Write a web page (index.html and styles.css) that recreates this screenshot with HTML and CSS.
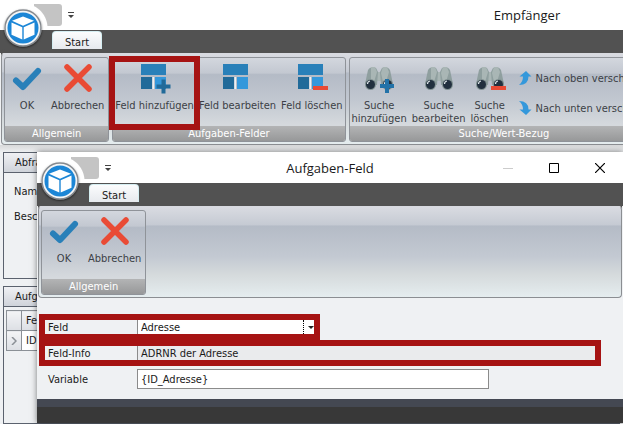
FILE: index.html
```html
<!DOCTYPE html>
<html lang="de">
<head>
  <meta charset="UTF-8">
  <meta name="viewport" content="width=device-width, initial-scale=1.0">
  <title>Empfänger</title>
  <link rel="stylesheet" href="styles.css">
</head>
<body>
  <!-- shared icon shapes -->
  <svg class="sprite" aria-hidden="true">
    <symbol id="cube" viewBox="0 0 38 38">
      <circle cx="19" cy="19" r="18" fill="#f4f5f6" stroke="#85898e" stroke-width="1.5"/>
      <circle cx="19" cy="19" r="15.5" fill="#1c86d6"/>
      <path d="M19 7.500l11 4.300L19 16.700 8 11.800z" fill="#fff"/>
      <path d="M7.500 13.400l10.800 4.900v12.200L7.500 25.800zM30.500 13.400l-10.800 4.900v12.200l10.800-4.700z" fill="#fff"/>
    </symbol>
    <symbol id="check" viewBox="0 0 32 32">
      <path d="M5 18.500l7 6.500L27 9" fill="none" stroke="#2980b9" stroke-width="6" stroke-linecap="round" stroke-linejoin="round"/>
    </symbol>
    <symbol id="cross" viewBox="0 0 32 32">
      <path d="M5 5l22 22M27 5L5 27" fill="none" stroke="#e94b35" stroke-width="5.500" stroke-linecap="round"/>
    </symbol>
    <symbol id="tiles" viewBox="0 0 32 32">
      <path d="M2 2h25v11H2z" fill="#2980b9"/>
      <path d="M2 15h11v12H2z" fill="#216a99"/>
      <path d="M16 15h11v12H16z" fill="#3498db"/>
      <path d="M13.500 15h1.500v12h-1.500z" fill="#edf1f4"/>
    </symbol>
    <symbol id="binoculars" viewBox="0 0 32 32">
      <path d="M12 10h8v9h-8z" fill="#a9b6b5"/>
      <path d="M2 22L5 8q1-2 4-3l4 1 2 4-1 13zM30 22L27 8q-1-2-4-3l-4 1-2 4 1 13z" fill="#8f9f9f"/>
      <path d="M8 5h4l2 5-3 10H8zM20 5h4l2 5-3 10h-3l-2-9z" fill="#a9b6b5"/>
      <circle cx="7.500" cy="22.500" r="5.500" fill="#809091"/>
      <circle cx="24.500" cy="22.500" r="5.500" fill="#809091"/>
      <circle cx="7.500" cy="22.500" r="4.500" fill="#22303f"/>
      <circle cx="24.500" cy="22.500" r="4.500" fill="#22303f"/>
      <path d="M4.500 22q0-2.500 2.500-3M21.500 22q0-2.500 2.500-3" fill="none" stroke="#dfe7e9" stroke-width="1.200"/>
    </symbol>
    <symbol id="arrow" viewBox="0 0 14 16">
      <path d="M1 15Q5 12 5 6.500H1.500L8 1l5.500 5.500h-3Q10.500 15 1 15z" fill="#3498db"/>
    </symbol>
  </svg>

  <div class="window">
    <header class="titlebar titlebar-main">
      <div class="quick-access">
        <span class="quick-box"></span>
        <svg class="quick-arrow" viewBox="0 0 6 7"><path d="M0 0h6v1H0zM0 3h6L3 6z" fill="#444"/></svg>
      </div>
      <h1>Empfänger</h1>
    </header>
    <nav class="tabs"><a class="tab" href="#start">Start</a></nav>
    <button class="orb" aria-label="Menü"><svg><use href="#cube"/></svg></button>

    <div class="ribbon ribbon-wide">
      <section class="group">
        <div class="tools">
          <button class="tool"><svg><use href="#check"/></svg>OK</button>
          <button class="tool"><svg><use href="#cross"/></svg>Abbrechen</button>
        </div>
        <h2>Allgemein</h2>
      </section>
      <section class="group">
        <div class="tools tools-dense">
          <button class="tool marked">
            <svg viewBox="0 0 32 32"><use href="#tiles"/><path d="M22.500 17.500h4v5h5v4h-5v5h-4v-5h-5v-4h5z" fill="#216a99"/></svg>Feld hinzufügen
          </button>
          <button class="tool"><svg><use href="#tiles"/></svg>Feld bearbeiten</button>
          <button class="tool">
            <svg viewBox="0 0 32 32"><use href="#tiles"/><path d="M17 24h15v4H17z" fill="#e94b35"/></svg>Feld löschen
          </button>
        </div>
        <h2>Aufgaben-Felder</h2>
      </section>
      <section class="group">
        <div class="tools tools-dense">
          <button class="tool">
            <svg viewBox="0 0 32 32"><use href="#binoculars"/><path d="M22 17h4v5h5v4h-5v5h-4v-5h-5v-4h5z" fill="#2272a8"/></svg>Suche<br>hinzufügen
          </button>
          <button class="tool"><svg><use href="#binoculars"/></svg>Suche<br>bearbeiten</button>
          <button class="tool">
            <svg viewBox="0 0 32 32"><use href="#binoculars"/><path d="M17 24h15v4H17z" fill="#e94b35"/></svg>Suche<br>löschen
          </button>
          <div class="moves">
            <button class="move"><svg><use href="#arrow"/></svg>Nach oben verschieben</button>
            <button class="move"><svg class="flip"><use href="#arrow"/></svg>Nach unten verschieben</button>
          </div>
        </div>
        <h2>Suche/Wert-Bezug</h2>
      </section>
    </div>

    <main class="content">
      <section class="panel panel-query">
        <h3>Abfrage</h3>
        <p>Name</p>
        <p>Beschreibung</p>
      </section>
      <section class="panel panel-fields">
        <h3>Aufgaben</h3>
        <table class="fields">
          <tr><th></th><th>Feld</th></tr>
          <tr><td class="marker"><svg viewBox="0 0 6 8"><path d="M1 0l4 4-4 4" fill="none" stroke="#8b9096" stroke-width="1.500"/></svg></td><td>ID</td></tr>
        </table>
      </section>
    </main>
  </div>

  <div class="window dialog" role="dialog" aria-labelledby="dialogTitle">
    <header class="titlebar titlebar-dialog">
      <div class="quick-access">
        <span class="quick-box"></span>
        <svg class="quick-arrow" viewBox="0 0 6 7"><path d="M0 0h6v1H0zM0 3h6L3 6z" fill="#444"/></svg>
      </div>
      <h1 id="dialogTitle">Aufgaben-Feld</h1>
      <div class="controls">
        <button aria-label="Minimieren" disabled><svg viewBox="0 0 10 10"><path d="M0 5.500h10" stroke="#ccc"/></svg></button>
        <button aria-label="Maximieren"><svg viewBox="0 0 10 10"><path d="M.5.5h9v9h-9z" fill="none" stroke="#000"/></svg></button>
        <button aria-label="Schließen"><svg viewBox="0 0 10 10"><path d="M0 0l10 10M10 0L0 10" stroke="#000" stroke-width="1.200"/></svg></button>
      </div>
    </header>
    <nav class="tabs"><a class="tab" href="#start">Start</a></nav>
    <button class="orb" aria-label="Menü"><svg><use href="#cube"/></svg></button>

    <div class="ribbon">
      <section class="group">
        <div class="tools">
          <button class="tool"><svg><use href="#check"/></svg>OK</button>
          <button class="tool"><svg><use href="#cross"/></svg>Abbrechen</button>
        </div>
        <h2>Allgemein</h2>
      </section>
    </div>

    <form class="form">
      <div class="row outlined row-field">
        <label for="field">Feld</label>
        <div class="select">
          <select id="field"><option>Adresse</option></select>
          <span class="select-arrow"></span>
        </div>
      </div>
      <div class="row outlined row-info">
        <label for="info">Feld-Info</label>
        <input id="info" type="text" value="ADRNR der Adresse" readonly>
      </div>
      <div class="row row-variable">
        <label for="variable">Variable</label>
        <input id="variable" type="text" value="{ID_Adresse}">
      </div>
    </form>
    <footer class="statusbar"></footer>
  </div>
</body>
</html>
```

FILE: styles.css
```css
* {
  box-sizing: border-box;
}
body {
  margin: 0;
  height: 100vh;
  overflow: hidden;
  position: relative;
  font-family: Tahoma, "DejaVu Sans Condensed", "DejaVu Sans", sans-serif;
  font-size: 11px;
  line-height: 13px;
  color: #1a1a1a;
}
h1, h2, h3, p {
  margin: 0;
  font-size: 11px;
  font-weight: normal;
}
button, input, select {
  font: inherit;
  color: inherit;
  border: 0;
  padding: 0;
  margin: 0;
  background: none;
}
svg {
  display: block;
}
.sprite {
  position: absolute;
  width: 0;
  height: 0;
}

/* windows */
.window {
  display: flex;
  flex-direction: column;
  height: 100%;
  position: relative;
  overflow: hidden;
  background: #eff1f3;
}
.dialog {
  position: absolute;
  z-index: 2;
  top: 152px;
  left: 37px;
  right: 0;
  height: auto;
  border-top: 1px solid #fff;
  overflow: visible;
  box-shadow: 0 0 6px rgba(0, 0, 0, 0.5);
}
.titlebar {
  display: grid;
  align-items: center;
  height: 30px;
  flex: none;
  background: #fff;
}
.titlebar-main {
  grid-template-columns: 431px 1fr;
}
.titlebar-dialog {
  grid-template-columns: 138px 1fr 138px;
}
.titlebar h1 {
  font-family: "Segoe UI", "Open Sans", sans-serif;
  font-size: 13px;
  line-height: 20px;
  text-align: center;
}
.quick-access {
  display: flex;
  align-items: center;
  gap: 6px;
  padding-left: 34px;
}
.quick-box {
  width: 28px;
  height: 22px;
  border-radius: 0 3px 3px 0;
  background: radial-gradient(circle at -11px 24px, #fff 24px, #c4c4c4 25px);
}
.quick-arrow {
  width: 6px;
  height: 7px;
}
.controls {
  display: flex;
}
.controls button {
  flex: 1;
  display: flex;
  justify-content: center;
}
.controls svg {
  width: 10px;
  height: 10px;
}
.tabs {
  display: flex;
  align-items: flex-end;
  flex: none;
  height: 23px;
  padding-left: 52px;
  background: #525252;
}
.tab {
  width: 50px;
  height: 22px;
  line-height: 22px;
  border: 1px solid #d5eef2;
  border-bottom: 0;
  border-radius: 4px 4px 0 0;
  background: linear-gradient(#fbfcfd, #e2e5ea);
  color: #1a1a1a;
  text-align: center;
  text-decoration: none;
}
.orb {
  position: absolute;
  top: 9px;
  left: 4px;
  border-radius: 50%;
  box-shadow: 0 1px 2px rgba(0, 0, 0, 0.5);
}
.orb svg {
  width: 38px;
  height: 38px;
}

/* ribbon */
.ribbon {
  display: flex;
  gap: 3px;
  flex: none;
  height: 92px;
  margin: 0 1px;
  padding: 3px 2px 2px;
  border: 1px solid #8b8e92;
  border-top-color: #d8dae0;
  border-radius: 4px;
  background: linear-gradient(#d9dbe1, #c5cad3 20%, #b4bbc6 21%, #c3c9d2 55%, #d5dadc 75%, #e5edef);
  box-shadow: 0 -4px 0 #525252;
}
.ribbon-wide {
  margin-right: -4px;
}
.group {
  display: flex;
  flex-direction: column;
  flex: none;
  border: 1px solid #8f9399;
  border-radius: 3px;
  background: linear-gradient(#d3d7de, #c3c8d1 18%, #b4bbc6 20%, #c1c7d0 50%, #d5d9dd 80%);
}
.group h2 {
  height: 15px;
  line-height: 16px;
  border-radius: 0 0 2px 2px;
  background: linear-gradient(#b3b4b5, #979899);
  color: #fff;
  text-align: center;
}
.tools {
  display: flex;
  align-items: flex-start;
  flex: 1;
  gap: 6px;
  padding: 4px 4px 0;
}
.tools-dense {
  gap: 5px;
  padding: 4px 2px 0;
}
.tool {
  min-width: 36px;
  color: #3c3f46;
  white-space: nowrap;
}
.tool svg {
  width: 32px;
  height: 32px;
  margin: 0 auto 5px;
}
.marked {
  position: relative;
  z-index: 1;
  padding-bottom: 12px;
  outline: 6px solid #a61313;
}
.moves {
  display: flex;
  flex-direction: column;
  gap: 14px;
  padding: 8px 0 0 4px;
}
.move {
  display: flex;
  align-items: center;
  gap: 4px;
  height: 16px;
  color: #3c3f46;
  white-space: nowrap;
}
.move svg {
  width: 14px;
  height: 16px;
}
.flip {
  transform: scaleY(-1);
}

/* content behind the dialog */
.content {
  display: flex;
  flex-direction: column;
  flex: 1;
  gap: 7px;
  padding: 7px 3px 0;
  background: linear-gradient(#d8d9da, #eff1f3 8px);
}
.panel {
  border: 1px solid #5b626e;
}
.panel h3 {
  height: 20px;
  padding-left: 11px;
  line-height: 19px;
  border-bottom: 1px solid #5b626e;
  background: linear-gradient(#f0f1f4, #cfd3da);
}
.panel p {
  padding: 12px 0 0 10px;
}
.panel-query {
  height: 127px;
}
.panel-fields {
  flex: 1;
  padding: 0 2px;
}
.panel-fields h3 {
  margin: 0 -2px 3px;
}
.fields {
  width: 100%;
  border-collapse: collapse;
  background: #fff;
}
.fields th,
.fields td {
  height: 20px;
  padding: 0 4px;
  border: 1px solid #8b9096;
  font-weight: normal;
  text-align: left;
}
.fields th,
.fields .marker {
  background: linear-gradient(#f3f4f6, #dcdfe4);
}
.fields tr > :first-child {
  width: 14px;
}
.marker svg {
  width: 6px;
  height: 8px;
}

/* form */
.form {
  padding: 16px 22px 10px 2px;
}
.row {
  display: grid;
  grid-template-columns: 92px 1fr;
  align-items: center;
  padding-left: 6px;
}
.row label {
  padding-left: 3px;
}
.row input {
  min-width: 0;
  padding-left: 3px;
}
.outlined {
  height: 26px;
  border: 6px solid #a61313;
  padding-left: 0;
}
.row-field {
  width: 281px;
}
.row-info input {
  height: 14px;
  border-left: 1px solid #8b8b8b;
  background: #eaebed;
}
.row-variable {
  width: 450px;
  margin-top: 3px;
}
.row-variable input {
  height: 20px;
  border: 1px solid #8b8b8b;
  background: #fff;
}
.select {
  position: relative;
  height: 14px;
  border-left: 1px solid #8b8b8b;
  background: #fff;
}
.select select {
  appearance: none;
  display: block;
  width: 100%;
  height: 14px;
  padding-left: 3px;
}
.select-arrow {
  position: absolute;
  top: 0;
  right: 0;
  width: 11px;
  height: 14px;
  border-left: 1px dotted #000;
  pointer-events: none;
}
.select-arrow::after {
  content: "";
  position: absolute;
  top: 6px;
  right: 0;
  border: 3px solid transparent;
  border-top-color: #222;
}
.statusbar {
  height: 24px;
  border-top: 8px solid #444852;
  background: #383838;
}
```
